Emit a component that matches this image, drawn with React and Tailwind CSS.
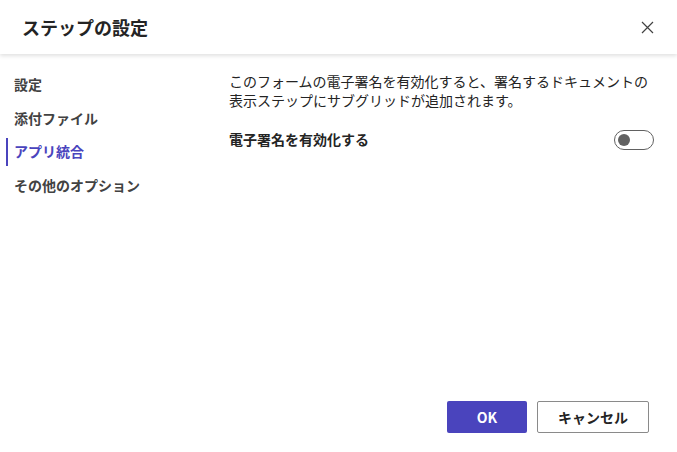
import React from "react";

const navItems = ["設定", "添付ファイル", "アプリ統合", "その他のオプション"];

export default function App() {
  const active = 2;
  return (
    <div
      className="w-[677px] h-[452px] bg-white flex flex-col text-[#242424] overflow-hidden"
      style={{ fontFamily: '"Noto Sans CJK JP", "Noto Sans", sans-serif' }}
    >
      {/* header */}
      <div className="h-[54px] shrink-0 flex items-center justify-between pl-[22px] pr-[22px] shadow-[0_2px_4px_rgba(0,0,0,0.12)] relative z-10">
        <h1 className="text-[18px] font-bold leading-none text-[#242424]">ステップの設定</h1>
        <button className="w-[16px] h-[16px] flex items-center justify-center text-[#424242]">
          <svg width="13" height="13" viewBox="0 0 13 13" fill="none">
            <path d="M1 1L12 12M12 1L1 12" stroke="currentColor" strokeWidth="1.2" />
          </svg>
        </button>
      </div>

      <div className="flex flex-1">
        {/* left nav */}
        <div className="w-[229px] shrink-0 pl-[6px] pt-[14px] flex flex-col">
          {navItems.map((item, i) => (
            <div key={item} className="h-[33.5px] flex items-center">
              <div
                className={
                  "h-[28px] flex items-center pl-[6px] border-l-2 text-[14px] font-semibold " +
                  (i === active ? "border-[#4a44bd] text-[#4a44bd]" : "border-transparent text-[#424242]")
                }
              >
                {item}
              </div>
            </div>
          ))}
        </div>

        {/* content */}
        <div className="flex-1 pt-[18px] pr-[23px]">
          <p className="text-[14px] leading-[19px] text-[#242424]">
            このフォームの電子署名を有効化すると、署名するドキュメントの
            <br />
            表示ステップにサブグリッドが追加されます。
          </p>
          <div className="mt-[19px] flex items-center justify-between">
            <span className="text-[14px] font-bold text-[#242424]">電子署名を有効化する</span>
            <div className="w-[40px] h-[20px] rounded-full border border-[#616161] flex items-center pl-[3px]">
              <div className="w-[12px] h-[12px] rounded-full bg-[#616161]" />
            </div>
          </div>
        </div>
      </div>

      {/* footer */}
      <div className="flex justify-end gap-[10px] pr-[28px] pb-[19px]">
        <button className="w-[80px] h-[32px] rounded-[2px] bg-[#4a44bd] text-white text-[14px] font-semibold">
          OK
        </button>
        <button className="w-[112px] h-[32px] rounded-[2px] border border-[#8a8a8a] bg-white text-[#242424] text-[14px] font-bold">
          キャンセル
        </button>
      </div>
    </div>
  );
}
